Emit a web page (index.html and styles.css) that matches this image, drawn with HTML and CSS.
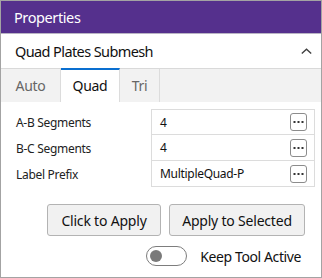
FILE: index.html
```html
<!DOCTYPE html>
<html>
<head>
<meta charset="utf-8">
<link rel="stylesheet" href="styles.css">
</head>
<body>
<div class="panel">
  <div class="header">Properties</div>
  <div class="section-head">
    <span class="section-title">Quad Plates Submesh</span>
    <svg class="chevron" width="11" height="6" viewBox="0 0 11 6"><path d="M0.8 5.4 L5.5 1.2 L10.2 5.4" fill="none" stroke="#404040" stroke-width="1.4"/></svg>
  </div>
  <div class="tabs">
    <div class="tab tab-auto">Auto</div>
    <div class="tab tab-quad active">Quad</div>
    <div class="tab tab-tri">Tri</div>
  </div>
  <div class="content">
    <div class="grid">
      <div class="label">A-B Segments</div>
      <div class="value first"><span>4</span><span class="dots"><svg width="15" height="16" viewBox="0 0 15 16"><rect x="2.5" y="7" width="2" height="2" fill="#333"/><rect x="6.5" y="7" width="2" height="2" fill="#333"/><rect x="10.5" y="7" width="2" height="2" fill="#333"/></svg></span></div>
      <div class="label">B-C Segments</div>
      <div class="value"><span>4</span><span class="dots"><svg width="15" height="16" viewBox="0 0 15 16"><rect x="2.5" y="7" width="2" height="2" fill="#333"/><rect x="6.5" y="7" width="2" height="2" fill="#333"/><rect x="10.5" y="7" width="2" height="2" fill="#333"/></svg></span></div>
      <div class="label">Label Prefix</div>
      <div class="value"><span>MultipleQuad-P</span><span class="dots"><svg width="15" height="16" viewBox="0 0 15 16"><rect x="2.5" y="7" width="2" height="2" fill="#333"/><rect x="6.5" y="7" width="2" height="2" fill="#333"/><rect x="10.5" y="7" width="2" height="2" fill="#333"/></svg></span></div>
    </div>
    <div class="buttons">
      <div class="btn btn-click">Click to Apply</div>
      <div class="btn btn-sel">Apply to Selected</div>
    </div>
    <div class="toggle-row">
      <div class="toggle"><div class="knob"></div></div>
      <span class="toggle-label">Keep Tool Active</span>
    </div>
  </div>
</div>
</body>
</html>
```
FILE: styles.css
```css
* { box-sizing: border-box; }
html, body { margin: 0; padding: 0; background: #fff; }
body { font-family: "Noto Sans", "Open Sans", sans-serif; color: #1a1a1a; }
.panel {
  width: 322px; height: 278px;
  border: 1px solid #a3a3a3;
  display: flex; flex-direction: column;
  background: #fff;
}
.header {
  height: 33px;
  background: #55308d;
  color: #fff;
  font-size: 14.5px;
  letter-spacing: -0.4px;
  padding-left: 13px;
  display: flex; align-items: center;
  border-bottom: 1px solid #b9b4c4;
}
.section-head {
  height: 34px;
  display: flex; align-items: center; justify-content: space-between;
  padding: 0 9px 0 14px;
  font-size: 14.5px;
  letter-spacing: -0.6px;
  color: #111;
}
.chevron { display: block; margin-top: 0; }
.tabs {
  height: 34px;
  display: flex;
  background: #f2f2f2;
  border-top: 1px solid #d9d9d9;
}
.tab {
  display: flex; align-items: center; justify-content: center;
  font-size: 14px; color: #666;
  letter-spacing: -0.3px;
  border-right: 1px solid #dcdcdc;
}
.tab-auto { width: 60px; }
.tab-quad { width: 59px; }
.tab-tri { width: 40px; }
.tab.active {
  background: #fff; color: #111;
  border-top: 2px solid #0a6fd0;
  margin-top: -1px;
  padding-bottom: 1px;
}
.content {
  flex: 1;
  padding: 7px 5px 0 15px;
  display: flex; flex-direction: column;
}
.grid {
  display: grid;
  grid-template-columns: 135px 164px;
}
.label {
  height: 26px;
  display: flex; align-items: center;
  font-size: 12px; color: #222;
  letter-spacing: -0.3px;
}
.value {
  height: 26px;
  border-left: 1px solid #dcdcdc;
  border-right: 1px solid #dcdcdc;
  border-bottom: 1px solid #dcdcdc;
  display: flex; align-items: center; justify-content: space-between;
  padding: 0 7px 0 8px;
  font-size: 12px; color: #111;
  letter-spacing: -0.3px;
}
.value.first { border-top: 1px solid #dcdcdc; }
.dots {
  width: 17px; height: 18px;
  border: 1px solid #8c8c8c;
  border-radius: 3px;
  display: flex; align-items: center; justify-content: center;
}
.dots svg { display: block; }
.buttons {
  display: flex; justify-content: flex-end; gap: 8px;
  margin-top: 17px;
  padding-right: 11px;
}
.btn {
  height: 32px;
  border: 1px solid #b3b3b3;
  border-radius: 3px;
  background: #f1f1f1;
  display: flex; align-items: center; justify-content: center;
  font-size: 14px; color: #111;
  letter-spacing: -0.2px;
}
.btn-click { width: 114px; }
.btn-sel { width: 136px; }
.toggle-row {
  display: flex; justify-content: flex-end; align-items: center;
  gap: 13px;
  margin-top: 10px;
  padding-right: 15px;
}
.toggle {
  width: 41px; height: 20px;
  border: 1px solid #7d7d7d;
  border-radius: 10px;
  display: flex; align-items: center;
  padding-left: 3px;
}
.knob { width: 12px; height: 12px; border-radius: 50%; background: #7a7a7a; }
.toggle-label { font-size: 14px; color: #111; letter-spacing: -0.4px; }
```
